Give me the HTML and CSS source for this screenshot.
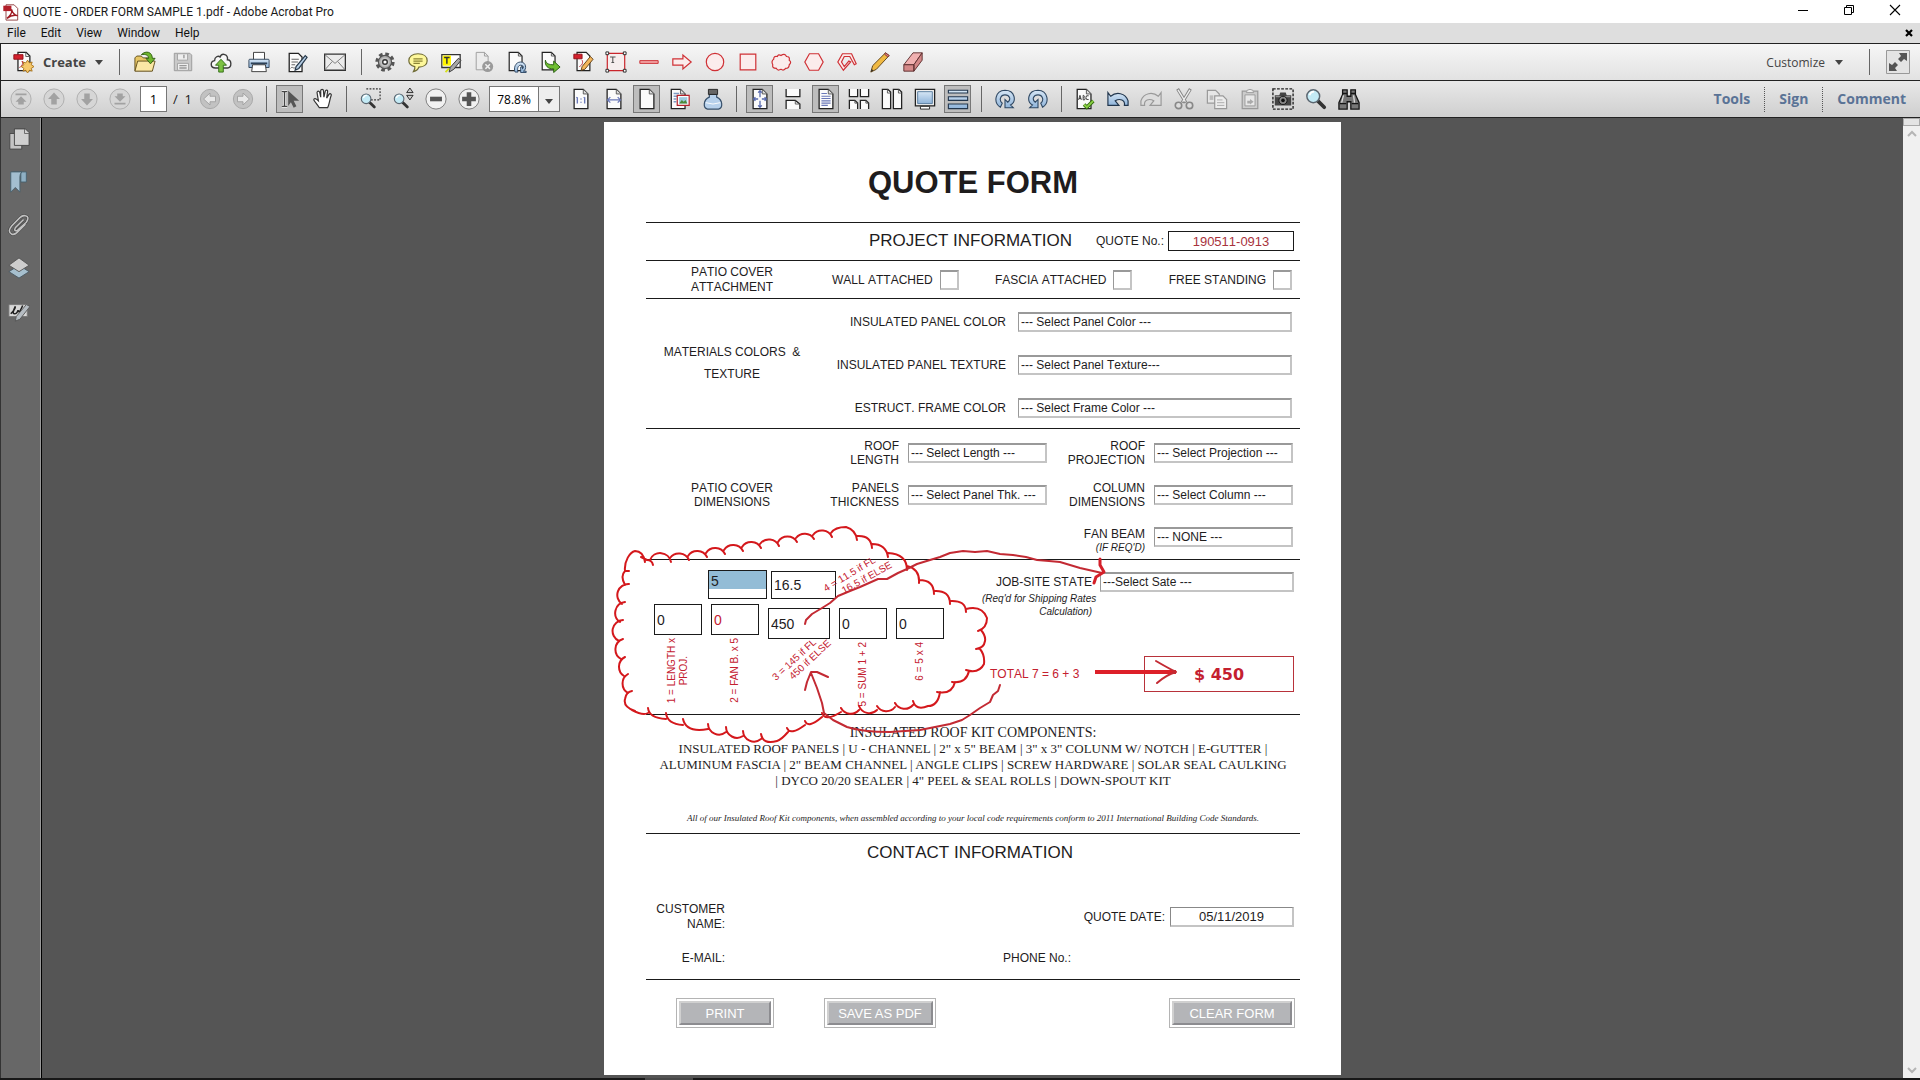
FILE: index.html
```html
<!DOCTYPE html>
<html lang="en">
<head>
    <meta charset="UTF-8">
    <meta name="viewport" content="width=device-width, initial-scale=1.0">
    <title>QUOTE - ORDER FORM SAMPLE 1.pdf - Adobe Acrobat Pro</title>
    <link rel="stylesheet" href="styles.css">
</head>
<body>

    <!-- shared page outline used by many toolbar icons -->
    <svg class="defs" aria-hidden="true">
        <defs>
            <linearGradient id="blue" x1="0" y1="0" x2="0" y2="1"><stop offset="0" stop-color="#d6e6f5"/><stop offset="1" stop-color="#8fb4da"/></linearGradient>
            <symbol id="page" viewBox="0 0 24 24"><path d="M4.5 1.5h10l5 5v16h-15z" fill="#fbfbfb" stroke="#222" stroke-width="1.4"/><path d="M14.5 1.5v5h5" fill="#ddd" stroke="#555"/></symbol>
            <symbol id="lens" viewBox="0 0 24 24"><path d="M14 14l7 7" stroke="#333" stroke-width="4" stroke-linecap="round"/><circle cx="9" cy="9" r="7" fill="#c3eaf5" stroke="#5b6670" stroke-width="1.6"/><path d="M5 8q1-4 5-4" fill="none" stroke="#fff" stroke-width="2"/></symbol>
        </defs>
    </svg>

    <header class="titlebar">
        <svg class="app-icon" viewBox="0 0 18 20"><path d="M4 2h9l4 4v13H4z" fill="#fff" stroke="#8a3a3a"/><path d="M1 3h9v6H1z" fill="#b3202a"/><path d="M5 17c4-3 6-7 5-10c2 6 4 7 7 7c-4-1-8 0-12 3z" fill="none" stroke="#a01c24" stroke-width="1.6"/></svg>
        <span class="title">QUOTE - ORDER FORM SAMPLE 1.pdf - Adobe Acrobat Pro</span>
        <div class="window-buttons">
            <button aria-label="Minimize"><svg viewBox="0 0 12 12"><path d="M1 6.5h10" stroke="#000"/></svg></button>
            <button aria-label="Restore"><svg viewBox="0 0 12 12"><path d="M1.5 3.5h7v7h-7zM3.5 3.5v-2h7v7h-2" fill="none" stroke="#000"/></svg></button>
            <button aria-label="Close"><svg viewBox="0 0 12 12"><path d="M1 1l10 10M11 1L1 11" stroke="#000" stroke-width="1.1"/></svg></button>
        </div>
    </header>

    <nav class="menubar">
        <a href="#">File</a>
        <a href="#">Edit</a>
        <a href="#">View</a>
        <a href="#">Window</a>
        <a href="#">Help</a>
        <button class="close-doc" aria-label="Close document"><svg viewBox="0 0 8 8"><path d="M1 1l6 6M7 1L1 7" stroke="#000" stroke-width="2.2"/></svg></button>
    </nav>

    <div class="toolbar toolbar-main">
        <button class="create">
            <svg class="icon" viewBox="0 0 24 24"><path d="M6.5 1.5h9l4 4v16h-13z" fill="#fbfbfb" stroke="#222" stroke-width="1.4"/><path d="M15 1.5v4.5h4.5" fill="none" stroke="#555"/><path d="M2 4h10v5H2z" fill="#d3202c" stroke="#8e1018"/><path d="M8 18c4-2 4-5 3-7c2 4 4 4 6 4" fill="none" stroke="#b8202a"/><path d="M17 10l2 3 3-1-1 3 3 2-3 2 1 3-3-1-2 3-2-3-3 1 1-3-3-2 3-2-1-3 3 1z" fill="#f6c96b" stroke="#a9731d"/></svg>
            Create
            <i class="caret"></i>
        </button>
        <i class="sep"></i>
        <div class="group wide">
            <button aria-label="Open"><svg class="icon" viewBox="0 0 24 24"><path d="M1 7.5l2-2h5l2 2h9v14H1z" fill="#e7c666" stroke="#5d4a18"/><path d="M4 11h19l-3 11H1z" fill="#fbe7a4" stroke="#5d4a18"/><path d="M8 4c5-5 12-3 12 4h3l-5 6-5-6h3c0-3-3-5-8-4z" fill="#6fb52c" stroke="#2f5e10"/></svg></button>
            <button aria-label="Save" disabled><svg class="icon" viewBox="0 0 24 24"><path d="M2.5 2.5h17l2 2v17h-19z" fill="#c9c9c9" stroke="#999"/><path d="M6 3h11v7H6zM6 13.5h12V21H6z" fill="#eee" stroke="#a2a2a2"/><path d="M13 4v4M8 16h8M8 18.5h8" stroke="#999" stroke-width="1.5"/></svg></button>
            <button aria-label="Upload"><svg class="icon" viewBox="0 0 24 24"><path d="M6 18.5c-6 0-6-7-1-8c0-4 4-6 6-4c2-5 9-3 8 3c5 0 5 9 0 9z" fill="#f7f7f7" stroke="#3c3c3c" stroke-width="1.5"/><path d="M12 9l6 6.5h-3.500V23h-5v-7.500H6z" fill="#7cc142" stroke="#2f6b14"/></svg></button>
            <button aria-label="Print"><svg class="icon" viewBox="0 0 24 24"><path d="M6 1.5h12v9H6z" fill="#fff" stroke="#333"/><path d="M2 9h20q1 0 1 1v8H1v-8q0-1 1-1z" fill="url(#blue)" stroke="#2e4258"/><path d="M3 13.5h18" stroke="#2e4258" stroke-width="2"/><path d="M5 15h14l1 7.5H4z" fill="#fff" stroke="#333"/></svg></button>
            <button aria-label="Edit"><svg class="icon" viewBox="0 0 24 24"><path d="M3.5 2.5h10l4 4v16h-14z" fill="#fbfbfb" stroke="#222" stroke-width="1.4"/><path d="M6 9h8M6 12h7M6 15h4M5 19c2-3 3 1 5-1" fill="none" stroke="#555"/><path d="M21 5l2 2-9 12-4 2 1-4z" fill="#b5cde4" stroke="#26384a" stroke-width="1.3"/></svg></button>
            <button aria-label="Mail"><svg class="icon" viewBox="0 0 24 24"><path d="M.7 3.5h22.600v17.500H.7z" fill="#ebebeb" stroke="#333" stroke-width="1.4"/><path d="M1 4l11 9.500L23 4M1 20.500l8-9M23 20.500l-8-9" fill="none" stroke="#777"/></svg></button>
        </div>
        <i class="sep"></i>
        <div class="group">
            <button aria-label="Preferences"><svg class="icon" viewBox="0 0 24 24"><circle cx="12" cy="12" r="8.5" fill="none" stroke="#555" stroke-width="4" stroke-dasharray="3.8 2.88"/><circle cx="12" cy="12" r="7.2" fill="#aaa" stroke="#555" stroke-width="1.3"/><circle cx="12" cy="12" r="5" fill="#c4c4c4"/><circle cx="12" cy="12" r="2.5" fill="#fff" stroke="#333" stroke-width="1.5"/></svg></button>
            <button aria-label="Sticky note"><svg class="icon" viewBox="0 0 24 24"><path d="M12 3c6 0 10 3 10 7.5s-4 7-9 7c-1 3-4 4.5-6 5c1-2 2-3 1.5-5.5C5 16 2 14 2 10.5C2 6 6 3 12 3z" fill="#fdf79a" stroke="#6e6a35" stroke-width="1.3"/><path d="M7 8.5h10M7 11h10M7 13.5h7" stroke="#8b8435" stroke-width="1.3"/></svg></button>
            <button aria-label="Highlight"><svg class="icon" viewBox="0 0 24 24"><path d="M2 4h20v14H2z" fill="#fff" stroke="#333" stroke-width="1.4"/><path d="M3 5h9v11H3z" fill="#fff500"/><path d="M4.5 7h6M7.5 7v7" stroke="#333" stroke-width="1.6"/><path d="M20 8l3 2-8 10-5 3 1-5z" fill="#a8a8a8" stroke="#333"/><path d="M6 23l4-4" stroke="#d6e01a" stroke-width="2"/></svg></button>
            <button aria-label="Delete page" disabled><svg class="icon" viewBox="0 0 24 24"><path d="M3.5 1.5h9l4 4v15h-13z" fill="#ececec" stroke="#9a9a9a"/><path d="M12.5 1.5v4h4" fill="none" stroke="#9a9a9a"/><circle cx="16" cy="17" r="6" fill="#9a9a9a"/><path d="M13.5 14.5l5 5M18.5 14.5l-5 5" stroke="#eee" stroke-width="1.6"/></svg></button>
            <button aria-label="Attach"><svg class="icon" viewBox="0 0 24 24"><path d="M3.5 1.5h10l4 4v16h-14z" fill="#fbfbfb" stroke="#222" stroke-width="1.3"/><path d="M13.5 1.5v4h4" fill="none" stroke="#555"/><path d="M10 23c-2-4 0-11 6-11s7 8 3 10h3v1.5h-6v-6h2v2c2-1 1-4-2-4s-4 4-3 7.5z" fill="url(#blue)" stroke="#28425f"/></svg></button>
            <button aria-label="Export page"><svg class="icon" viewBox="0 0 24 24"><path d="M3.5 1.5h10l4 4v15h-14z" fill="#fbfbfb" stroke="#222" stroke-width="1.3"/><path d="M13.5 1.5v4h4" fill="none" stroke="#555"/><path d="M7 10c1 4 4 5 9 5v-4l7 6.5-7 6v-4C10 20 6 16 7 10z" fill="#6fbe32" stroke="#245b0c"/></svg></button>
            <button aria-label="Edit PDF"><svg class="icon" viewBox="0 0 24 24"><path d="M5.5 1.5h10l4 4v16h-14z" fill="#fbfbfb" stroke="#222" stroke-width="1.3"/><path d="M2 3.5h9v5H2z" fill="#d3202c" stroke="#8e1018"/><path d="M8 17c4-2 4-5 3-7" fill="none" stroke="#b8202a"/><path d="M20 6l3 3-9 11-4 1 1-4z" fill="#f3b65c" stroke="#5e3c14"/></svg></button>
            <button aria-label="Text box"><svg class="icon" viewBox="0 0 24 24"><path d="M2.5 2.5h19v19h-19z" fill="#f6eeee" stroke="#c9252b" stroke-width="1.3"/><path d="M5.5 6.5h6M8.5 6.5v6M7 12.5h3" stroke="#555" stroke-width="1.2"/><path d="M1 1h3v3H1zM20 1h3v3h-3zM1 20h3v3H1zM20 20h3v3h-3z" fill="#fff" stroke="#222"/></svg></button>
            <button aria-label="Line"><svg class="icon" viewBox="0 0 24 24"><path d="M2 10.5h20v3H2z" fill="#f4a6a6" stroke="#c9252b"/></svg></button>
            <button aria-label="Arrow"><svg class="icon red" viewBox="0 0 24 24"><path d="M2 8.5h11v-4l9 7.5-9 7.5v-4H2z"/></svg></button>
            <button aria-label="Oval"><svg class="icon red" viewBox="0 0 24 24"><circle cx="12" cy="12" r="9.5"/></svg></button>
            <button aria-label="Rectangle"><svg class="icon red" viewBox="0 0 24 24"><path d="M3.500 3.500h17v17h-17z"/></svg></button>
            <button aria-label="Cloud"><svg class="icon red" viewBox="0 0 24 24"><path d="M4 9q0-4 4-3q1-3 4-1q4-3 6 1q4 0 3 4q3 2 0 5q0 4-4 4q-2 3-5 1q-4 2-5-1q-5 0-4-4q-2-4 1-6z"/></svg></button>
            <button aria-label="Polygon"><svg class="icon red" viewBox="0 0 24 24"><path d="M7 3h10l5 9-5 9H7l-5-9z"/></svg></button>
            <button aria-label="Connected lines"><svg class="icon red" viewBox="0 0 24 24"><path d="M8 21L2 12l5-9h10l5 11-2 1-5-9H9l-3 6 3 5 5-6 2 1z"/></svg></button>
            <button aria-label="Pencil"><svg class="icon" viewBox="0 0 24 24"><path d="M18 2l4 3L8 20l-6 3 2-7z" fill="#f0b942" stroke="#5b3d10"/><path d="M17 3.5l3.500 3L22 5l-4-3z" fill="#e77d7d" stroke="#7a3838"/><path d="M2 23l1-3 2 1z" fill="#222"/></svg></button>
            <button aria-label="Eraser"><svg class="icon" viewBox="0 0 24 24"><path d="M12 2h10l-9 13H2z" fill="#f0b0b0" stroke="#5a2c2c"/><path d="M2 15h11v7H2zM13 22l9-12V2l-9 13z" fill="#d48888" stroke="#5a2c2c"/></svg></button>
        </div>
        <button class="customize">Customize <i class="caret"></i></button>
        <i class="sep"></i>
        <button class="expand" aria-label="Read mode"><svg viewBox="0 0 24 24"><path d="M.5.5h23v23H.5z" fill="#e4e4e4" stroke="#999"/><path d="M13 3h8v8l-3-2-3 3-3-3 3-3zM3 13l3 2 3-3 3 3-3 3 2 3H3z" fill="#555"/></svg></button>
    </div>

    <div class="toolbar toolbar-nav">
        <div class="group">
            <button aria-label="First page" disabled><svg class="icon" viewBox="0 0 24 24"><circle class="ring" cx="12" cy="12" r="11"/><path d="M6 6h12v2H6zM12 9l6 6h-3v3H9v-3H6z" fill="#a2a2a2"/></svg></button>
            <button aria-label="Previous page" disabled><svg class="icon" viewBox="0 0 24 24"><circle class="ring" cx="12" cy="12" r="11"/><path d="M12 5l6.500 7H15v6H9v-6H5.500z" fill="#a2a2a2"/></svg></button>
            <button aria-label="Next page" disabled><svg class="icon" viewBox="0 0 24 24"><circle class="ring" cx="12" cy="12" r="11"/><path d="M12 19l6.500-7H15V6H9v6H5.500z" fill="#a2a2a2"/></svg></button>
            <button aria-label="Last page" disabled><svg class="icon" viewBox="0 0 24 24"><circle class="ring" cx="12" cy="12" r="11"/><path d="M6 16h12v2H6zM12 15l6-6h-3V6H9v3H6z" fill="#a2a2a2"/></svg></button>
        </div>
        <input class="page-no" type="text" value="1" aria-label="Page number">
        <span class="page-count">/&nbsp; 1</span>
        <div class="group">
            <button aria-label="Back" disabled><svg class="icon" viewBox="0 0 24 24"><circle cx="12" cy="12" r="10.5" fill="#c2c2c2" stroke="#a5a5a5"/><path d="M5 12l7-6.500V9h6v6h-6v3.500z" fill="#e8e8e8" stroke="#a0a0a0"/></svg></button>
            <button aria-label="Forward" disabled><svg class="icon" viewBox="0 0 24 24"><circle cx="12" cy="12" r="10.5" fill="#c2c2c2" stroke="#a5a5a5"/><path d="M19 12l-7-6.500V9H6v6h6v3.500z" fill="#e8e8e8" stroke="#a0a0a0"/></svg></button>
        </div>
        <i class="sep"></i>
        <div class="group">
            <button class="on" aria-label="Selection tool"><svg class="icon" viewBox="0 0 24 24"><path d="M3 4h6M6 4v16M3 20h6" stroke="#eee" stroke-width="3"/><path d="M3 4h6M6 4v16M3 20h6" stroke="#444" stroke-width="1.4"/><path d="M10 3l12 11h-6l3 6-3 1.500-3-6-3 4z" fill="#555"/></svg></button>
            <button aria-label="Hand tool"><svg class="icon" viewBox="0 0 24 24"><path d="M8 21.500C6 18 3 15 2 13c0-2 2-2 5 1L5.500 5c0-2 2.500-2 3 0l1 5V3c0-2 3-2 3 0l.5 7 1.500-6.500c.5-2 3-1.500 2.500.5L16 11l2.500-4c1-1.500 3-.5 2.500 1c-2 5-2 10-4 13.500z" fill="#fff" stroke="#333" stroke-width="1.3"/></svg></button>
        </div>
        <i class="sep"></i>
        <div class="group">
            <button aria-label="Marquee zoom"><svg class="icon" viewBox="0 0 24 24"><path d="M8 1h15v12H13" fill="none" stroke="#333" stroke-width="1.3" stroke-dasharray="2 1.5"/><use href="#lens" x="1" y="5" width="18" height="18"/></svg></button>
            <button aria-label="Dynamic zoom"><svg class="icon" viewBox="0 0 24 24"><use href="#lens" x="1" y="5" width="18" height="18"/><path d="M19.500 0l3.500 5h-7zM16 8h7l-3.500 5z" fill="#ccc" stroke="#222"/></svg></button>
            <button aria-label="Zoom out"><svg class="icon" viewBox="0 0 24 24"><circle cx="12" cy="12" r="11" fill="#f1f1f1" stroke="#777"/><path d="M5.500 9.500h13v5h-13z" fill="#555"/></svg></button>
            <button aria-label="Zoom in"><svg class="icon" viewBox="0 0 24 24"><circle cx="12" cy="12" r="11" fill="#f1f1f1" stroke="#777"/><path d="M9.500 4.500h5v5h5v5h-5v5h-5v-5h-5v-5h5z" fill="#555"/></svg></button>
        </div>
        <div class="zoom-box">
            <input type="text" value="78.8%" aria-label="Zoom">
            <button aria-label="Zoom levels"><i class="caret"></i></button>
        </div>
        <div class="group">
            <button aria-label="Actual size"><svg class="icon" viewBox="0 0 24 24"><use href="#page"/><path d="M8 10v7M7 11l1-1M16 10v7M15 11l1-1M12 11.500v1M12 15v1" stroke="#6a78b8" stroke-width="1.5"/></svg></button>
            <button aria-label="Fit width"><svg class="icon" viewBox="0 0 24 24"><use href="#page"/><path d="M4.500 13h15M8 10l-3 3 3 3M16 10l3 3-3 3" fill="none" stroke="#6a78b8" stroke-width="1.4"/></svg></button>
            <button class="on" aria-label="Single page"><svg class="icon" viewBox="0 0 24 24"><use href="#page"/></svg></button>
            <button aria-label="Fit visible"><svg class="icon" viewBox="0 0 24 24"><use href="#page" x="-2"/><path d="M5 6h6M5 9h4M5 12h3M5 15h3" stroke="#7d9cc4" stroke-width="1.5"/><path d="M9 8h13v11H9z" fill="#fff" stroke="#b4232b" stroke-width="1.3"/><path d="M11 10h9v7h-9z" fill="#9ecbe0"/><path d="M11 17l3-4 2 2 2-2 2 4z" fill="#4c8a3a"/></svg></button>
            <button aria-label="Ink"><svg class="icon" viewBox="0 0 24 24"><path d="M8 7h8v3c7 3 7 12 2 13H6C1 22 1 13 8 10z" fill="#b7d1ec" stroke="#37506b" stroke-width="1.3"/><path d="M7 1.500h10v5.500H7z" fill="#666" stroke="#222"/><path d="M4 16q8 3 16 0" fill="none" stroke="#fff"/></svg></button>
        </div>
        <i class="sep"></i>
        <div class="group">
            <button class="on" aria-label="Fit page"><svg class="icon" viewBox="0 0 24 24"><use href="#page"/><path d="M12 3v7M12 14v7M6 12h4M14 12h4M10 5l2-2 2 2M10 19l2 2 2-2M7 10l-2 2 2 2M17 10l2 2-2 2" fill="none" stroke="#5668ad" stroke-width="1.4"/></svg></button>
            <button aria-label="Scrolling"><svg class="icon" viewBox="0 0 24 24"><path d="M4.500 1v8.500h15V1M4.500 23v-9.500h10l5 4V23" fill="#fbfbfb" stroke="#222" stroke-width="1.4"/><path d="M14.500 13.500v4h5" fill="none" stroke="#555"/></svg></button>
            <button class="on" aria-label="One page"><svg class="icon" viewBox="0 0 24 24"><use href="#page"/><path d="M7 6h6M7 9h10M7 11.500h10M7 14h10M7 16.500h10M7 19h7" stroke="#6a78b8" stroke-width="1.2"/></svg></button>
            <button aria-label="Two page scrolling"><svg class="icon" viewBox="0 0 24 24"><path d="M1.500 1v8.500h9V1M13.500 1v8.500h9V1M1.500 23v-9.500h6l3 3V23M13.500 23v-9.500h6l3 3V23" fill="#fbfbfb" stroke="#222" stroke-width="1.4"/><path d="M7.500 13.500v3h3M19.500 13.500v3h3" fill="none" stroke="#555"/></svg></button>
            <button aria-label="Two pages"><svg class="icon" viewBox="0 0 24 24"><path d="M1.500 1.500h6l3 3v18h-9zM13.500 1.500h6l3 3v18h-9z" fill="#fbfbfb" stroke="#222" stroke-width="1.4"/><path d="M7 1.500v4h3.500M19 1.500v4h3.500" fill="none" stroke="#555"/></svg></button>
            <button aria-label="Full screen"><svg class="icon" viewBox="0 0 24 24"><path d="M1.500 1.500h21v18h-21z" fill="#eee" stroke="#222" stroke-width="1.4"/><path d="M4 4h16v13H4z" fill="url(#blue)" stroke="#55799d"/><path d="M7 20h10v3H7z" fill="#fff" stroke="#222"/></svg></button>
            <button class="on" aria-label="Show toolbars"><svg class="icon" viewBox="0 0 24 24"><path d="M1.500 2.500h21v3h-21zM1.500 9.500h21v4h-21zM1.500 17.500h21v5h-21z" fill="url(#blue)" stroke="#22364d" stroke-width="1.2"/></svg></button>
        </div>
        <i class="sep"></i>
        <div class="group">
            <button aria-label="Rotate clockwise"><svg class="icon" viewBox="0 0 24 24"><path d="M7 21C-1 16 1 3 12 2.500c11 0 13 12 6 16l3 3h-9v-9l3 3c4-3 2-8-3-8c-5 0-7 6-3 9z" fill="url(#blue)" stroke="#2f4863" stroke-width="1.2"/></svg></button>
            <button aria-label="Rotate counterclockwise"><svg class="icon" viewBox="0 0 24 24"><path d="M17 21c8-5 6-18-5-18.500C1 2.500-1 14.500 6 18.500l-3 3h9v-9l-3 3C5 12.500 7 7.500 12 7.500c5 0 7 6 3 9z" fill="url(#blue)" stroke="#2f4863" stroke-width="1.2"/></svg></button>
        </div>
        <i class="sep"></i>
        <div class="group">
            <button aria-label="Spell check"><svg class="icon" viewBox="0 0 24 24"><use href="#page" x="-1"/><path d="M5 13l1.500-5L8 13M5.500 11.500h2M10 8v5h1.500q1.500-1.500-.5-2.500q1.500-1.500-.5-2.500zM16 8.500q-3-1-3 2t3 2" fill="none" stroke="#333"/><path d="M11 18l3 3 7-7" fill="none" stroke="#346b10" stroke-width="4"/><path d="M11 18l3 3 7-7" fill="none" stroke="#8bd046" stroke-width="2"/></svg></button>
            <button aria-label="Undo"><svg class="icon" viewBox="0 0 24 24"><path d="M1 5l3 4c6-5 16-4 19 5v5h-4c1-6-5-8-10-5l4 5H1z" fill="url(#blue)" stroke="#22364d" stroke-width="1.3"/></svg></button>
            <button aria-label="Redo" disabled><svg class="icon" viewBox="0 0 24 24"><path d="M23 5l-3 4C14 4 4 5 1 14v5h4c-1-6 5-8 10-5l-4 5h12z" fill="#ddd" stroke="#999" stroke-width="1.3"/></svg></button>
            <button aria-label="Cut" disabled><svg class="icon" viewBox="0 0 24 24"><path d="M5 1l9 15M19 1l-9 15" stroke="#888" stroke-width="3.5"/><path d="M5.500 2l8 13M18.500 2l-8 13" stroke="#eee" stroke-width="1.5"/><circle cx="6" cy="19" r="3.5" fill="#ddd" stroke="#888" stroke-width="1.8"/><circle cx="18" cy="19" r="3.5" fill="#ddd" stroke="#888" stroke-width="1.8"/></svg></button>
            <button aria-label="Copy" disabled><svg class="icon" viewBox="0 0 24 24"><path d="M1.500 2.500h9l4 4v10h-13z" fill="#e6e6e6" stroke="#999" stroke-width="1.3"/><path d="M4 8h4v5H4z" fill="#bbb"/><path d="M9.500 8.500h9l4 4v10h-13z" fill="#ececec" stroke="#999" stroke-width="1.3"/><path d="M12 13h6M12 16h8M12 19h8" stroke="#aaa"/></svg></button>
            <button aria-label="Paste" disabled><svg class="icon" viewBox="0 0 24 24"><path d="M3.500 3.500h17v19h-17z" fill="#ccc" stroke="#999" stroke-width="1.3"/><path d="M6.500 7.500h11v12h-11z" fill="#e8e8e8" stroke="#999"/><path d="M8 5q0-3.500 4-3.500T16 5z" fill="#eee" stroke="#999"/><path d="M9 17v-3h3v-2l4 3-4 3v-1z" fill="#aaa"/></svg></button>
            <button aria-label="Snapshot"><svg class="icon" viewBox="0 0 24 24"><path d="M1 1h22v22H1z" fill="none" stroke="#222" stroke-width="1.5" stroke-dasharray="3 1.5"/><path d="M3 8h5l1-3h6l1 3h5v11H3z" fill="#444"/><path d="M4 9.500h16" stroke="#aaa"/><circle cx="12" cy="13.5" r="4.5" fill="#888" stroke="#111"/><circle cx="12" cy="13.5" r="2" fill="#111"/></svg></button>
            <button aria-label="Search"><svg class="icon" viewBox="0 0 24 24"><use href="#lens"/></svg></button>
            <button aria-label="Find"><svg class="icon" viewBox="0 0 24 24"><path d="M5 2h5v7h4V2h5v5l4 9v7h-9v-8h-4v8H1v-7l4-9z" fill="#777" stroke="#151515" stroke-width="1.4"/><path d="M2 17h7M15 17h7M5 6h5M14 6h5" stroke="#151515" stroke-width="1.5"/><path d="M6 8l-2 8M17 8l1 8" stroke="#ddd" stroke-width="1.4"/></svg></button>
        </div>
        <div class="panes">
            <a href="#">Tools</a>
            <a href="#">Sign</a>
            <a href="#">Comment</a>
        </div>
    </div>

    <div class="viewer">
        <aside class="sidebar">
            <button aria-label="Page thumbnails"><svg class="icon" viewBox="0 0 24 24"><path d="M2 6h13v17H2z" fill="#c4c4c4" stroke="#444"/><path d="M7 1h12l4 4v14H7z" fill="#d0d0d0" stroke="#444"/><path d="M18 1v5h5" fill="none" stroke="#666"/></svg></button>
            <button aria-label="Bookmarks"><svg class="icon" viewBox="0 0 24 24"><path d="M5 1h15v11h-6V1" fill="#8fb0c4" stroke="#47606f"/><path d="M3 1h12q-2 2-2 5v17l-5-5-5 5z" fill="#a3bfd0" stroke="#47606f"/></svg></button>
            <button aria-label="Attachments"><svg class="icon" viewBox="0 0 24 24"><path d="M17 6l-9 9q-2 4 2 3l10-9q4-6-1-7q-3-1-6 2L4 13q-5 6 0 9q3 1 6-2l9-9" fill="none" stroke="#444" stroke-width="3"/><path d="M17 6l-9 9q-2 4 2 3l10-9q4-6-1-7q-3-1-6 2L4 13q-5 6 0 9q3 1 6-2l9-9" fill="none" stroke="#c2c2c2" stroke-width="1.7"/></svg></button>
            <button aria-label="Layers"><svg class="icon" viewBox="0 0 24 24"><path d="M12 9l11 7-11 7-11-7z" fill="#a6bfce" stroke="#4a5963"/><path d="M12 1l11 8-11 7L1 9z" fill="#cdcdcd" stroke="#555"/></svg></button>
            <button aria-label="Signatures"><svg class="icon" viewBox="0 0 24 24"><path d="M1 5h20v13H1z" fill="#d8d8d8" stroke="#777"/><path d="M3 15q5-5 5-8q-4 8-1 8q3 0 4-4q1 5 5-5" fill="none" stroke="#222" stroke-width="1.7"/><path d="M20 5l4 2-11 14-5 2 1-5z" fill="#b5bcc2" stroke="#555"/></svg></button>
        </aside>

        <main class="document">
            <form class="sheet">
                <h1>QUOTE FORM</h1>

                <section class="project">
                    <h2>PROJECT INFORMATION</h2>
                    <div class="quote-no">
                        <label for="quote-no">QUOTE No.:</label>
                        <input id="quote-no" type="text" value="190511-0913">
                    </div>
                </section>

                <section class="attachment">
                    <p class="row-title">PATIO COVER<br>ATTACHMENT</p>
                    <div class="checks">
                        <label>WALL ATTACHED <input type="checkbox"></label>
                        <label>FASCIA ATTACHED <input type="checkbox"></label>
                        <label>FREE STANDING <input type="checkbox"></label>
                    </div>
                </section>

                <section class="materials">
                    <p class="row-title">MATERIALS COLORS&nbsp; &amp;<br>TEXTURE</p>
                    <div class="fields">
                        <label for="color">INSULATED PANEL COLOR</label>
                        <select id="color"><option>--- Select Panel Color ---</option></select>
                        <label for="texture">INSULATED PANEL TEXTURE</label>
                        <select id="texture"><option>--- Select Panel Texture---</option></select>
                        <label for="frame">ESTRUCT. FRAME COLOR</label>
                        <select id="frame"><option>--- Select Frame Color ---</option></select>
                    </div>
                </section>

                <section class="dimensions">
                    <p class="row-title">PATIO COVER<br>DIMENSIONS</p>
                    <label for="length">ROOF<br>LENGTH</label>
                    <select id="length"><option>--- Select Length ---</option></select>
                    <label for="projection">ROOF<br>PROJECTION</label>
                    <select id="projection"><option>--- Select Projection ---</option></select>
                    <label for="thickness">PANELS<br>THICKNESS</label>
                    <select id="thickness"><option>--- Select Panel Thk. ---</option></select>
                    <label for="column">COLUMN<br>DIMENSIONS</label>
                    <select id="column"><option>--- Select Column ---</option></select>
                    <label class="fan" for="fan">FAN BEAM<br><small>(IF REQ'D)</small></label>
                    <select class="fan" id="fan"><option>--- NONE ---</option></select>
                </section>

                <section class="pricing">
                    <div class="calc">
                        <div class="calc-top">
                            <input class="box selected" type="text" value="5" aria-label="Fan beam rate">
                            <input class="box" type="text" value="16.5" aria-label="Rate 4">
                        </div>
                        <div class="calc-row">
                            <div class="cell"><input class="box" id="c1" type="text" value="0"><label for="c1">1 = LENGTH x<br>PROJ.</label></div>
                            <div class="cell"><input class="box red-text" id="c2" type="text" value="0"><label for="c2">2 = FAN B. x 5</label></div>
                            <div class="cell low big"><input class="box" type="text" value="450" aria-label="Rate 3"></div>
                            <div class="cell low"><input class="box" id="c5" type="text" value="0"><label for="c5">5 = SUM 1 + 2</label></div>
                            <div class="cell low"><input class="box" id="c6" type="text" value="0"><label for="c6">6 = 5 x 4</label></div>
                        </div>
                    </div>
                    <div class="state-total">
                        <div class="state">
                            <label for="state">JOB-SITE STATE<small>(Req'd for Shipping Rates<br>Calculation)</small></label>
                            <select id="state"><option>---Select Sate ---</option></select>
                        </div>
                        <div class="total">
                            <label for="total">TOTAL 7 = 6 + 3</label>
                            <input id="total" type="text" value="$ 450">
                        </div>
                    </div>
                </section>

                <section class="kit">
                    <p class="kit-title">INSULATED ROOF KIT COMPONENTS:</p>
                    <p>INSULATED ROOF PANELS | U - CHANNEL | 2" x 5" BEAM | 3" x 3" COLUNM W/ NOTCH | E-GUTTER |<br>
                    ALUMINUM FASCIA | 2" BEAM CHANNEL | ANGLE CLIPS | SCREW HARDWARE | SOLAR SEAL CAULKING<br>
                    | DYCO 20/20 SEALER | 4" PEEL &amp; SEAL ROLLS | DOWN-SPOUT KIT</p>
                    <p class="disclaimer">All of our Insulated Roof Kit components, when assembled according to your local code requirements conform to 2011 International Building Code Standards.</p>
                </section>

                <section class="contact">
                    <h2>CONTACT INFORMATION</h2>
                    <div class="contact-row">
                        <label class="first" for="name">CUSTOMER NAME:</label>
                        <input class="blank" id="name" type="text">
                        <label for="date">QUOTE DATE:</label>
                        <input class="date" id="date" type="text" value="05/11/2019">
                    </div>
                    <div class="contact-row">
                        <label class="first" for="email">E-MAIL:</label>
                        <input class="blank" id="email" type="text">
                        <label for="phone">PHONE No.:</label>
                        <input class="phone" id="phone" type="text">
                    </div>
                </section>

                <section class="actions">
                    <button type="button" class="print">PRINT</button>
                    <button type="button" class="save">SAVE AS PDF</button>
                    <button type="button" class="clear">CLEAR FORM</button>
                </section>

                <!-- review markup drawn over the form -->
                <svg class="markup" viewBox="604 122 737 953">
                    <path class="cloud" d="M625 571C624 561 630 552 635 551C641 551 644 556 645 562M641 557L647 560Q652 560 653 565
                        M650 560A11 11 0 0 1 671 562m-1 -4A11 11 0 0 1 689 560m-1 -4A11 11 0 0 1 707 557m-1 -4A11 11 0 0 1 725 554m-1 -4A11 11 0 0 1 743 551m-1 -4A11 11 0 0 1 761 548m-1 -4A11 11 0 0 1 779 546m-1 -4A11 11 0 0 1 797 542m-1 -4A11 11 0 0 1 814 539m-1 -4A11 11 0 0 1 832 537m-1 -4Q835 527 846 527Q856 530 857 540
                        m0 -4Q871 535 872 548m0 -4Q886 544 888 557m0 -4Q907 554 907 570m0 -4Q920 569 919 583m0 -3Q934 580 934 594m0 -3Q950 590 950 604m0 -3Q966 600 966 612m0 -3Q982 605 987 618Q987 628 978 631
                        m3 -1Q986 636 985 641Q984 648 976 649m4 0Q985 655 984 664Q979 674 966 670m3 1Q966 684 952 682m3 0Q952 695 937 692m3 0Q938 706 928 706Q916 711 913 701
                        m0 4A11 11 0 0 1 895 703m0 4A11 11 0 0 1 877 706m0 4A11 11 0 0 1 859 706m0 4A11 11 0 0 1 841 708m0 4Q825 722 822 713m0 4Q808 729 805 721m0 4Q790 736 787 728m1 4Q781 740 777 741Q763 745 761 734
                        m0 5A11 11 0 0 1 743 731m0 5A11 11 0 0 1 726 727m0 5A11 11 0 0 1 708 724m0 5Q686 733 683 719m0 6Q667 724 666 713m0 6Q649 718 648 708m0 5Q643 716 632 710
                        m3 1Q623 707 625 699Q626 692 632 691m-4 2A11 11 0 0 1 628 674m-4 2A11 11 0 0 1 625 657m-4 2A11 11 0 0 1 623 639m-4 2A11 11 0 0 1 623 620m-3 2A11 11 0 0 1 625 602m-3 2A11 11 0 0 1 629 584m-4 1Q620 576 625 571l4 0"/>
                    <path class="pen" d="M805 624L806 620L812 614L822 608L830 603L838 596L850 591L860 587L869 583L878 579L887 579L898 573L907 569L917 564L930 560L940 557L950 553L963 551L975 552L987 551L1000 554L1013 555L1026 557L1037 560L1049 561L1060 562L1080 568L1102 573"/>
                    <path class="pen head" d="M1100 559V565L1104 572L1096 577L1094 583"/>
                    <path class="pen" d="M1000 685L998 691L993 695L990 702L980 708L970 715L962 720L950 724L940 726L920 730L905 731L890 732Q862 732 847 727L833 720L824 713L822 703L817 688L811 673M805 690L807 682L811 672L817 672L828 677"/>
                    <path class="total-line" d="M1095 672H1176"/>
                    <path class="pen" d="M1156 661Q1168 668 1176 672Q1166 675 1157 683"/>
                    <text transform="translate(776 681) rotate(-43)">3 = 145 if FL</text>
                    <text transform="translate(793 680) rotate(-43)">450 if ELSE</text>
                    <text transform="translate(826 592) rotate(-31)">4 = 11.5 if FL</text>
                    <text transform="translate(844 594) rotate(-29)">16.5 if ELSE</text>
                </svg>
            </form>
        </main>

        <div class="scrollbar">
            <i class="thumb"></i>
            <svg viewBox="0 0 16 16"><path d="M4 10l4-4 4 4" fill="none" stroke="#b5b5b5" stroke-width="2"/></svg>
            <svg class="down" viewBox="0 0 16 16"><path d="M4 6l4 4 4-4" fill="none" stroke="#b5b5b5" stroke-width="2"/></svg>
        </div>
    </div>

    <footer class="taskbar"><i></i></footer>

</body>
</html>
```
FILE: styles.css
```css
* {
    box-sizing: border-box;
}

body {
    margin: 0;
    min-height: 100vh;
    display: flex;
    flex-direction: column;
    font-family: "Open Sans", sans-serif;
    font-size: 12px;
    color: #1a1a1a;
    background: #555;
}

button {
    border: 0;
    padding: 0;
    background: none;
    font-family: inherit;
    color: inherit;
}

.defs {
    position: absolute;
    width: 0;
    height: 0;
}

/* --- title bar and menu --- */
.titlebar,
.menubar {
    display: flex;
    align-items: center;
    font-family: Roboto, sans-serif;
}

.titlebar {
    height: 23px;
    padding-left: 2px;
    background: #fff;
}

.app-icon {
    width: 17px;
    height: 18px;
    margin-right: 4px;
}

.window-buttons {
    display: flex;
    margin-left: auto;
    align-items: center;
    padding-right: 2px;
}

.window-buttons button {
    width: 46px;
    height: 20px;
}

.window-buttons svg {
    width: 12px;
    height: 12px;
}

.menubar {
    gap: 15px;
    height: 20px;
    padding: 0 7px;
    background: #dedede;
}

.menubar a {
    color: #111;
    text-decoration: none;
}

.close-doc {
    margin-left: auto;
}

.close-doc svg {
    display: block;
    width: 8px;
    height: 8px;
}

/* --- toolbars --- */
.toolbar {
    display: flex;
    align-items: center;
    height: 37px;
    border-top: 1px solid #222;
    border-left: 1px solid #222;
    background: linear-gradient(#f6f6f6, #e2e2e2);
}

.toolbar-nav {
    height: 38px;
    padding-left: 3px;
    border-bottom: 1px solid #222;
    background: linear-gradient(#e8e8e8, #cfcfcf);
}

.group {
    display: flex;
}

.group button {
    display: flex;
    align-items: center;
    justify-content: center;
    width: 33px;
    height: 28px;
}

.group.wide button {
    width: 38px;
}

.icon {
    width: 22px;
    height: 22px;
    flex: none;
}

.group .on {
    width: 27px;
    margin: 0 3px;
    border: 1px solid #777;
    background: #bdbdbd;
}

.red {
    fill: #fbecec;
    stroke: #cf3035;
    stroke-width: 1.3;
}

.ring {
    fill: #d6d6d6;
    stroke: #acacac;
}

.sep {
    width: 1px;
    height: 26px;
    margin: 0 6px 0 7px;
    background: #666;
}

.caret {
    display: inline-block;
    border: 4px solid transparent;
    border-top: 5px solid #444;
    border-bottom: 0;
}

.create {
    display: flex;
    align-items: center;
    gap: 9px;
    width: 111px;
    padding-left: 11px;
    font-size: 13px;
    font-weight: 700;
    color: #444;
}

.customize {
    display: flex;
    align-items: center;
    gap: 10px;
    margin-left: auto;
    margin-right: 19px;
    font-size: 12px;
    color: #444;
}

.expand {
    margin: 0 10px;
}

.expand svg {
    display: block;
    width: 24px;
    height: 24px;
}

.page-no {
    width: 27px;
    height: 26px;
    margin-left: 4px;
    padding: 0;
    border: 1px solid #777;
    font: 13px "Open Sans", sans-serif;
    text-align: center;
}

.page-count {
    width: 26px;
    padding-left: 6px;
    font-size: 13px;
    white-space: nowrap;
}

.zoom-box {
    display: flex;
    width: 71px;
    height: 26px;
    margin: 0 4px;
    border: 1px solid #777;
}

.zoom-box input {
    width: 48px;
    padding: 0;
    border: 0;
    font: 12px "Open Sans", sans-serif;
    text-align: center;
}

.zoom-box button {
    flex: 1;
    border-left: 1px solid #777;
    background: #eee;
}

.panes {
    display: flex;
    margin-left: auto;
}

.panes a {
    padding: 2px 14px 4px;
    font-size: 14px;
    font-weight: 700;
    color: #5a7396;
    text-decoration: none;
}

.panes a + a {
    border-left: 1px dotted #555;
}

/* --- viewer --- */
.viewer {
    display: flex;
    flex: 1;
}

.sidebar {
    display: flex;
    flex-direction: column;
    align-items: center;
    gap: 21px;
    width: 42px;
    padding: 10px 4px 0 0;
    border-left: 1px solid #333;
    border-right: 1px solid #000;
    background: #676767;
    box-shadow: inset -1px 0 #999;
}

.sidebar svg {
    display: block;
}

.document {
    flex: 1;
    padding: 4px 0 3px;
    display: flex;
    justify-content: center;
}

.scrollbar {
    display: flex;
    flex-direction: column;
    align-items: center;
    width: 17px;
    background: #f0f0f0;
}

.scrollbar .thumb {
    width: 100%;
    height: 8px;
    border: 1px solid #aaa;
    background: #e4e4e4;
}

.scrollbar svg {
    width: 16px;
    height: 16px;
}

.scrollbar .down {
    margin-top: auto;
}

.taskbar {
    height: 2px;
    background: #181818;
}

.taskbar i {
    display: block;
    width: 48px;
    height: 2px;
    margin-left: 33.6%;
    background: #484848;
}

/* --- the PDF page --- */
.sheet {
    position: relative;
    width: 100%;
    max-width: 737px;
    padding: 0 41px 0 42px;
    background: #fff;
    font-family: "Liberation Sans", Arial, sans-serif;
    font-size: 12px;
    font-kerning: none;
    line-height: 15px;
    color: #1e1c1d;
}

.sheet p,
.sheet h1,
.sheet h2 {
    margin: 0;
}

.sheet h1 {
    padding: 43px 0 21px;
    font-size: 31px;
    line-height: 36px;
    text-align: center;
}

.sheet h2 {
    font-size: 17px;
    font-weight: 400;
    line-height: 20px;
    text-align: center;
    white-space: nowrap;
}

.sheet section {
    border-top: 1px solid #1a1a1a;
}

.sheet input,
.sheet select {
    margin: 0;
    padding: 0 3px;
    border-radius: 0;
    background: #fff;
    font-family: inherit;
    font-size: 12px;
    font-kerning: none;
    color: #1e1c1d;
}

.sheet select {
    appearance: none;
    width: 100%;
    height: 20px;
    padding: 0 2px;
    border: 2px solid #c4c4c4;
    border-top-color: #999;
    border-left: 1px solid #999;
}

.sheet small {
    display: block;
    font-size: 10px;
    font-style: italic;
    line-height: 13px;
}

.row-title {
    text-align: center;
}

.project {
    display: grid;
    grid-template-columns: 1fr 202px 1fr;
    align-items: center;
    padding: 8px 6px 9px 0;
}

.project h2 {
    grid-column: 2;
}

.quote-no {
    display: flex;
    justify-content: flex-end;
    align-items: center;
    gap: 4px;
    white-space: nowrap;
}

.sheet .quote-no input {
    width: 126px;
    height: 20px;
    border: 1px solid #1a1a1a;
    font-size: 13px;
    text-align: center;
    color: #a8323c;
}

.attachment,
.materials {
    display: grid;
    grid-template-columns: 172px 1fr;
    align-items: center;
}

.attachment {
    padding: 4px 0 3px;
}

.checks {
    display: flex;
    justify-content: space-between;
    padding: 0 8px 0 14px;
}

.checks label {
    display: flex;
    align-items: center;
    gap: 7px;
}

.checks input {
    appearance: none;
    width: 19px;
    height: 20px;
    border: 2px solid #c4c4c4;
    border-top-color: #999;
    border-left: 1px solid #999;
}

.materials {
    padding: 13px 8px 10px 0;
}

.materials .row-title {
    padding-bottom: 4px;
    line-height: 22px;
}

.fields {
    display: grid;
    grid-template-columns: 188px 1fr;
    align-items: center;
    gap: 23px 12px;
    text-align: right;
}

.dimensions {
    display: grid;
    grid-template-columns: 172px 72px 139px 89px 1fr;
    grid-template-rows: repeat(3, 28px);
    align-items: center;
    gap: 14px 9px;
    padding: 10px 7px 8px 0;
    line-height: 14px;
}

.dimensions label {
    text-align: right;
}

.dimensions .row-title {
    grid-row: 1 / 4;
}

.dimensions label.fan {
    grid-column: 4;
}

.dimensions .fan {
    align-self: start;
    margin-top: 4px;
}

/* --- calculation boxes --- */
.pricing {
    display: flex;
    justify-content: space-between;
}

.calc {
    padding: 10px 0 0 8px;
}

.calc-top {
    display: flex;
    align-items: flex-end;
    gap: 4px;
    padding-left: 54px;
    margin-bottom: 5px;
}

.sheet .box {
    width: 48px;
    height: 31px;
    border: 1px solid #1a1a1a;
    padding: 0 2px;
    font-size: 14px;
}

.sheet .calc-top .box {
    width: 65px;
    height: 28px;
}

.sheet .calc-top .selected {
    width: 59px;
    height: 29px;
    padding-bottom: 8px;
    background: linear-gradient(#93bcd6 18px, #fff 18px);
}

.calc-row {
    display: flex;
    gap: 9px;
}

.cell {
    display: flex;
    flex-direction: column;
    align-items: center;
    gap: 3px;
}

.cell.low {
    padding-top: 4px;
}

.sheet .big .box {
    width: 62px;
}

.cell label {
    writing-mode: vertical-rl;
    transform: rotate(180deg);
    font-size: 10px;
    line-height: 12px;
    text-align: center;
    color: #c4202f;
}

.sheet .red-text {
    color: #c4202f;
}

.state-total {
    width: 318px;
    padding: 12px 6px 22px 0;
}

.state {
    display: grid;
    grid-template-columns: 110px 1fr;
    gap: 8px;
    text-align: right;
}

.state label {
    padding-top: 3px;
    white-space: nowrap;
}

.state small {
    padding-top: 2px;
}

.total {
    display: flex;
    align-items: center;
    justify-content: space-between;
    margin-top: 38px;
    padding-left: 8px;
    color: #c4202f;
}

.sheet .total input {
    width: 150px;
    height: 36px;
    padding-left: 49px;
    border: 1px solid #b8323a;
    font: 700 16px "DejaVu Sans", sans-serif;
    color: #c4202f;
}

/* --- kit components --- */
.kit {
    padding: 9px 0 8px;
    font-family: "Liberation Serif", "Times New Roman", serif;
    font-size: 13px;
    font-kerning: auto;
    line-height: 16px;
    text-align: center;
    white-space: nowrap;
}

.kit .kit-title {
    font-size: 14px;
    line-height: 17px;
}

.kit .disclaimer {
    margin-top: 22px;
    font-size: 9px;
    font-style: italic;
    line-height: 14px;
}

/* --- contact --- */
.contact {
    padding: 9px 6px 13px 0;
}

.contact-row {
    display: flex;
    align-items: center;
    gap: 5px;
    margin-top: 18px;
}

.contact h2 + .contact-row {
    margin-top: 39px;
}

.contact-row .first {
    width: 79px;
    text-align: right;
}

.contact-row input {
    height: 16px;
    border: 0;
}

.contact-row .blank {
    flex: 1;
}

.sheet .contact-row .date {
    width: 124px;
    height: 20px;
    border: 2px solid #c4c4c4;
    border-top: 1px solid #888;
    border-left: 1px solid #888;
    font-size: 13px;
    text-align: center;
}

.contact-row .phone {
    width: 218px;
}

.actions {
    display: flex;
    gap: 56px;
    padding: 21px 8px 50px 33px;
}

.actions button {
    height: 24px;
    border: 2px solid #d0d0d0;
    border-right-color: #8c8c90;
    border-bottom-color: #8c8c90;
    outline: 1px solid #b4b4b4;
    outline-offset: 2px;
    background: #b4b5b8;
    font-size: 13px;
    color: #fff;
}

.print {
    width: 92px;
}

.save {
    width: 106px;
}

.clear {
    width: 120px;
    margin-left: auto;
}

/* --- review markup --- */
.markup {
    position: absolute;
    top: 0;
    left: 0;
    width: 737px;
    height: 953px;
    pointer-events: none;
}

.markup path {
    fill: none;
    stroke-linecap: round;
    stroke-linejoin: round;
}

.markup .cloud {
    stroke: #d4181c;
    stroke-width: 2;
}

.markup .pen {
    stroke: #c32a33;
    stroke-width: 2;
}

.markup .head {
    stroke: #d4202a;
    stroke-width: 3;
}

.markup .total-line {
    stroke: #dd2029;
    stroke-width: 4;
    stroke-linecap: butt;
}

.markup text {
    fill: #c4202f;
    font-size: 10px;
}
```
